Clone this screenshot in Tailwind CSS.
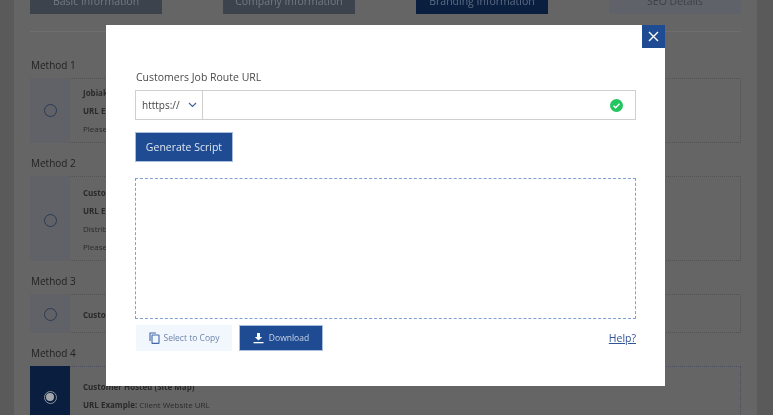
<!DOCTYPE html>
<html lang="en">
<head>
    <meta charset="UTF-8">
    <title>Customers Job Route URL</title>
    <script src="https://cdn.jsdelivr.net/npm/@tailwindcss/browser@4"></script>
</head>
<body class="w-[773px] h-[415px] overflow-hidden bg-[#5a5a5a] font-['Open_Sans',sans-serif]">
<div class="relative w-[773px] h-[415px] overflow-hidden blur-[0.4px]">
    <!-- Page behind the overlay -->
    <div class="mx-[14px] w-[743px] h-[415px] bg-[#656565] px-[16px] overflow-hidden">
        <div class="flex justify-between -mt-[16px] h-[30px] text-[10.5px] leading-[34px] text-center whitespace-nowrap">
            <div class="w-[132px] bg-[#3c434d] text-[#757a82]">Basic Information</div>
            <div class="w-[132px] bg-[#3c434d] text-[#757a82]">Company Information</div>
            <div class="w-[132px] bg-[#0a1f3f] text-[#5d6c84]">Branding Information</div>
            <div class="w-[132px] bg-[#5f6369] text-[#3d4046]">SEO Details</div>
        </div>
        <div class="mt-[17px] border-t border-[#6e6e6e]"></div>

        <p class="mt-[26px] h-[20px] pl-px text-[10px] leading-[15px] text-[#222222]">Method 1</p>
        <div class="flex h-[65px] border border-dotted border-[#525252]">
            <div class="-ml-px -my-px w-[40px] shrink-0 flex items-center justify-center bg-[#606268]">
                <span class="w-[13px] h-[13px] rounded-full border border-[#2b3a52]"></span>
            </div>
            <div class="pl-[13px] pt-[5px] text-[8px] leading-[18px] text-[#2a2a2a]">
                <p class="font-bold">Jobiak Hosted</p>
                <p class="font-bold">URL Example</p>
                <p>Please</p>
            </div>
        </div>

        <p class="mt-[13px] h-[20px] pl-px text-[10px] leading-[15px] text-[#222222]">Method 2</p>
        <div class="flex h-[85px] border border-dotted border-[#525252]">
            <div class="-ml-px -my-px w-[40px] shrink-0 flex items-center justify-center pt-[3px] bg-[#606268]">
                <span class="w-[13px] h-[13px] rounded-full border border-[#2b3a52]"></span>
            </div>
            <div class="pl-[13px] pt-[7px] text-[8px] leading-[18px] text-[#2a2a2a]">
                <p class="font-bold">Customer Hosted</p>
                <p class="font-bold">URL Example</p>
                <p>Distribute</p>
                <p>Please</p>
            </div>
        </div>

        <p class="mt-[13px] h-[20px] pl-px text-[10px] leading-[15px] text-[#222222]">Method 3</p>
        <div class="flex h-[39px] border border-dotted border-[#525252]">
            <div class="-ml-px -my-px w-[40px] shrink-0 flex items-center justify-center pt-px bg-[#606268]">
                <span class="w-[13px] h-[13px] rounded-full border border-[#2b3a52]"></span>
            </div>
            <div class="pl-[13px] pt-[2px] flex items-center text-[8px] font-bold text-[#2a2a2a]">Customer Hosted</div>
        </div>

        <p class="mt-[13px] h-[20px] pl-px text-[10px] leading-[15px] text-[#222222]">Method 4</p>
        <div class="flex h-[62px] border border-dotted border-[#4b4e60]">
            <div class="-ml-px -my-px w-[40px] shrink-0 flex items-center justify-center bg-[#0a1f3f]">
                <span class="w-[13px] h-[13px] rounded-full border border-[#8a8f98] flex items-center justify-center">
                    <span class="w-[8px] h-[8px] rounded-full bg-[#a3a6ab]"></span>
                </span>
            </div>
            <div class="pl-[13px] pt-[11px] text-[8px] leading-[18px] text-[#2a2a2a]">
                <p class="font-bold">Customer Hosted (Site Map)</p>
                <p><span class="font-bold">URL Example:</span> Client Website URL</p>
            </div>
        </div>
    </div>

    <!-- Modal -->
    <div class="absolute left-[106px] top-[25px] w-[559px] h-[361px] bg-white px-[29px] pt-[45px]">
        <button class="absolute right-0 top-0 w-[23px] h-[23px] flex items-center justify-center bg-[#1e4b92]">
            <svg class="w-[13px] h-[13px]" viewBox="0 0 13 13" fill="none" stroke="#ffffff" stroke-width="1.4"><path d="M2 2l9 9M11 2l-9 9"/></svg>
        </button>

        <label class="block h-[20px] pl-px text-[10.5px] leading-[14px] text-[#4a4a4a]">Customers Job Route URL</label>
        <div class="flex h-[30px] w-[501px] border border-[#cfcfcf]">
            <div class="w-[67px] shrink-0 flex items-center justify-between pl-[6px] pr-[5px] border-r border-[#cfcfcf] text-[10px] text-[#444444]">
                <span>htttps://</span>
                <svg class="w-[9px] h-[6px]" viewBox="0 0 9 6" fill="none" stroke="#3f5f9c" stroke-width="1.1"><path d="M1 1l3.5 3.5L8 1"/></svg>
            </div>
            <div class="flex-1 flex items-center justify-end pr-[12px]">
                <svg class="w-[13px] h-[13px]" viewBox="0 0 13 13"><circle cx="6.5" cy="6.5" r="6.5" fill="#22c55e"/><path d="M3.5 6.8l2.1 2 3.9-4" fill="none" stroke="#ffffff" stroke-width="1.4"/></svg>
            </div>
        </div>

        <button class="block mt-[12px] w-[98px] h-[30px] pt-[2px] bg-[#1e4b92] border border-[#a9bedd] text-[10.5px] text-[#dfe6f1]">Generate Script</button>

        <div class="mt-[16px] w-[501px] h-[141px] border border-dashed border-[#7f9fd6]"></div>

        <div class="mt-[6px] w-[501px] flex items-center">
            <button class="ml-px w-[96px] h-[26px] flex items-center justify-center gap-[4px] bg-[#f2f6fd] text-[8.5px] text-[#6f86ad]">
                <svg class="w-[11px] h-[12px]" viewBox="0 0 11 12" fill="none" stroke="#3f66a8" stroke-width="1.1"><path d="M1 9V1h6"/><rect x="3" y="3" width="7" height="8.4" rx="0.5"/></svg>
                <span>Select to Copy</span>
            </button>
            <button class="ml-[7px] w-[84px] h-[26px] flex items-center justify-center gap-[5px] bg-[#1e4b92] border border-[#a9bedd] text-[8.5px] text-[#c9d4e6]">
                <svg class="w-[11px] h-[11px]" viewBox="0 0 11 11" fill="#ffffff"><path d="M4 0h3v4h2.2L5.5 7.6 1.8 4H4z"/><rect x="0.5" y="9" width="10" height="1.3"/></svg>
                <span>Download</span>
            </button>
            <a href="#" class="ml-auto mt-px text-[10.5px] font-medium underline text-[#2f5597]">Help?</a>
        </div>
    </div>
</div>
</body>
</html>
